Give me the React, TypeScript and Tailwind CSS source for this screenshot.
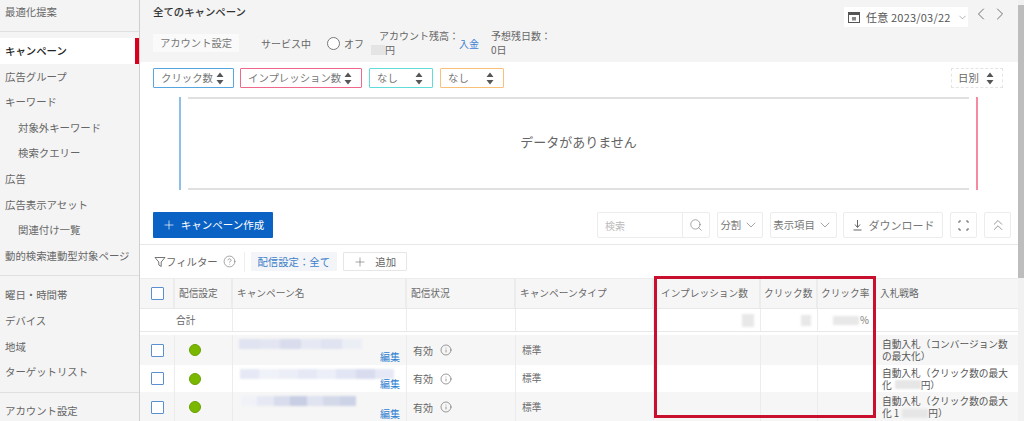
import React from 'react';
import { ChevronDown, ChevronLeft, ChevronRight, ChevronsUp, CircleHelp, Info, Plus, Search } from 'lucide-react';

const SortCaret = () => (
  <svg width="8" height="13" viewBox="0 0 8 13" className="shrink-0">
    <path d="M4 0.5 L7.5 5 H0.5 Z M4 12.5 L7.5 8 H0.5 Z" fill="#555" />
  </svg>
);

const SideItem = ({ label, active, sub }: { label: string; active?: boolean; sub?: boolean }) => (
  <div
    className={`h-[25.6px] flex items-center whitespace-nowrap ${sub ? 'pl-[18px]' : 'pl-[5px]'} ${
      active ? 'bg-white text-[#222] font-medium border-r-[4px] border-[#d9001b]' : ''
    }`}
  >
    {label}
  </div>
);

const Selector = ({ label, color, width }: { label: string; color: string; width: string }) => (
  <div className={`h-[20px] flex items-center justify-between pl-[7px] pr-[9px] border rounded-[1px] text-[10.4px] ${color} ${width}`}>
    <span className="whitespace-nowrap text-[#777]">{label}</span>
    <SortCaret />
  </div>
);

const ToolButton = ({ children, width }: { children: React.ReactNode; width: string }) => (
  <div className={`h-[26px] flex items-center justify-center gap-[2px] border border-[#ececec] rounded-[2px] text-[#777] whitespace-nowrap ${width}`}>
    {children}
  </div>
);

const COLS = 'grid grid-cols-[35px_58px_174px_109px_138px_107px_57px_58px_1fr]';

const HeaderCell = ({ children, last, pad = 'pl-[4px]' }: { children?: React.ReactNode; last?: boolean; pad?: string }) => (
  <div className={`flex items-center whitespace-nowrap overflow-hidden ${pad} ${last ? '' : 'border-r-2 border-[#ececec]'}`}>
    {children}
  </div>
);

const Faint = ({ className }: { className: string }) => <div className={`bg-[#e8e8e8] blur-[1px] ${className}`} />;

// blurred-out campaign names, one list of tints per row
const ROWS = [
  {
    bg: 'bg-[#f6f6f6]',
    h: 'h-[30px]',
    bar: 'w-[123px] ml-[6px]',
    name: ['#e0e3f0', '#e3e5f2', '#d8dcec', '#e6e8f4', '#e0e3f0', '#eceef6'],
    strategy: ['自動入札（コンバージョン数', 'の最大化）'],
    block: false,
  },
  {
    bg: 'bg-white',
    h: 'h-[27px]',
    bar: 'w-[154px] ml-[7px]',
    name: ['#e6e9f5', '#f0f2f9', '#eceef7', '#e6e9f5', '#edeff8', '#e2e5f3', '#d8dcee', '#e6e9f5'],
    strategy: ['自動入札（クリック数の最大', '化'],
    block: true,
  },
  {
    bg: 'bg-[#f6f6f6]',
    h: 'h-[30px]',
    bar: 'w-[115px] ml-[8px]',
    name: ['#f0f2f8', '#e6e9f3', '#d8dcec', '#c8cee4', '#e0e3f0', '#d4d9ea', '#cdd3e6'],
    strategy: ['自動入札（クリック数の最大', '化 1'],
    block: true,
  },
];

export default function App() {
  return (
    <div
      className="relative w-[1024px] h-[421px] overflow-hidden flex bg-white text-[10.4px] text-[#666]"
      style={{ fontFamily: '"Noto Sans CJK JP", "Open Sans", sans-serif' }}
    >
      {/* Sidebar */}
      <div className="w-[140px] shrink-0 bg-[#f4f4f4] border-r border-[#cfcfcf]">
        <div className="h-[32px] border-b border-[#e0e0e0] pl-[5px] pt-[4px]">最適化提案</div>
        <div className="pt-[6px] pb-[7px] border-b border-[#e0e0e0]">
          <SideItem label="キャンペーン" active />
          <SideItem label="広告グループ" />
          <SideItem label="キーワード" />
          <SideItem label="対象外キーワード" sub />
          <SideItem label="検索クエリー" sub />
          <SideItem label="広告" />
          <SideItem label="広告表示アセット" />
          <SideItem label="関連付け一覧" sub />
          <SideItem label="動的検索連動型対象ページ" />
        </div>
        <div className="pt-[6px] pb-[7px] border-b border-[#e0e0e0]">
          <SideItem label="曜日・時間帯" />
          <SideItem label="デバイス" />
          <SideItem label="地域" />
          <SideItem label="ターゲットリスト" />
        </div>
        <div className="pl-[5px] pt-[10px]">アカウント設定</div>
      </div>

      {/* Main column */}
      <div className="flex-1 min-w-0 flex flex-col">
        {/* Account header */}
        <div className="h-[62px] bg-[#f4f4f4] shrink-0 flex justify-between pl-[13px] pr-[8px]">
          <div>
            <div className="font-medium text-[#333] pt-[4px] leading-[16px]">全てのキャンペーン</div>
            <div className="flex items-center mt-[10px] h-[26px] text-[10px] whitespace-nowrap">
              <div className="w-[86px] h-[18px] bg-[#fafafa] flex items-center justify-center text-[10.3px] text-[#777]">アカウント設定</div>
              <span className="ml-[22px]">サービス中</span>
              <span className="ml-[16px] w-[13px] h-[13px] rounded-full border border-[#777] bg-white" />
              <span className="ml-[4px]">オフ</span>
              <div className="ml-[15px] leading-[14px] w-[80px]">
                <div>アカウント残高：</div>
                <div className="flex items-center -ml-[8px]">
                  <span className="w-[14px] h-[10px] bg-[#e4e4e4]" />
                  <span>円</span>
                </div>
              </div>
              <span className="text-[#3f7fd6]">入金</span>
              <div className="ml-[12px] leading-[14px]">
                <div>予想残日数：</div>
                <div>0日</div>
              </div>
            </div>
          </div>
          <div className="flex items-start pt-[7px]">
            <div className="w-[124px] h-[20px] bg-white flex items-center pl-[4px] gap-[6px] whitespace-nowrap text-[11px] text-[#555]">
              <svg width="12" height="11" viewBox="0 0 12 11" className="shrink-0">
                <rect x="0.5" y="0.5" width="11" height="10" fill="none" stroke="#555" />
                <rect x="0.5" y="0.5" width="11" height="2.5" fill="#555" />
                <rect x="4" y="5" width="4" height="3.5" fill="#888" />
              </svg>
              <span className="tracking-[0.2px]">任意 2023/03/22</span>
              <ChevronDown size={11} strokeWidth={1.2} className="text-[#777] shrink-0" />
            </div>
            <ChevronLeft size={20} strokeWidth={1.1} className="ml-[3px] text-[#666] -mt-[3px]" />
            <ChevronRight size={20} strokeWidth={1.1} className="-ml-[1px] text-[#666] -mt-[3px]" />
          </div>
        </div>

        {/* Metric selectors */}
        <div className="flex items-center justify-between h-[20px] mt-[6px] pl-[13px] pr-[15px] shrink-0">
          <div className="flex items-center gap-[6px]">
            <Selector label="クリック数" color="border-[#58a6e0]" width="w-[81px]" />
            <Selector label="インプレッション数" color="border-[#f0688c]" width="w-[122px]" />
            <Selector label="なし" color="border-[#62dcd8]" width="w-[64px] ml-[1px]" />
            <Selector label="なし" color="border-[#f8c078]" width="w-[64px] ml-[1px]" />
          </div>
          <div className="w-[52px] h-[20px] flex items-center justify-between pl-[6px] pr-[8px] border border-dashed border-[#e4e4e4]">
            <span>日別</span>
            <SortCaret />
          </div>
        </div>

        {/* Empty chart */}
        <div className="mt-[9px] ml-[39px] mr-[40px] h-[93px] shrink-0 flex">
          <div className="w-[2px] bg-[#8dc0e8] shrink-0" />
          <div className="flex-1 mx-[7px] pb-[3px] border-y-2 border-[#e0e0e0] flex items-center justify-center text-[13px] text-[#666]">
            データがありません
          </div>
          <div className="w-[2px] bg-[#f58aa0] shrink-0" />
        </div>

        {/* Toolbar */}
        <div className="mt-[22px] h-[33px] shrink-0 pl-[13px] pr-[7px] flex items-start justify-between border-b border-[#e8e8e8]">
          <div className="w-[120px] h-[26px] bg-[#0a62c4] rounded-[1px] flex items-center justify-center gap-[5px] text-white text-[10.5px] whitespace-nowrap">
            <Plus size={14} strokeWidth={1.2} />
            キャンペーン作成
          </div>
          <div className="flex items-center gap-[6.8px]">
            <div className="h-[26px] w-[113px] flex border border-[#ececec] rounded-[2px] text-[10px] text-[#bbb]">
              <div className="flex-1 flex items-center pl-[7px]">検索</div>
              <div className="w-[27px] flex items-center justify-center border-l border-[#ececec] text-[#777]">
                <Search size={14} strokeWidth={1.1} />
              </div>
            </div>
            <ToolButton width="w-[46px]">
              分割<ChevronDown size={16} strokeWidth={1} />
            </ToolButton>
            <ToolButton width="w-[67px]">
              表示項目<ChevronDown size={16} strokeWidth={1} />
            </ToolButton>
            <ToolButton width="w-[100px] text-[11px]">
              <svg width="11" height="12" viewBox="0 0 11 12" className="mr-[3px]">
                <path d="M5.5 1 V8 M3 5.5 L5.5 8.5 L8 5.5 M1.5 11 H9.5" fill="none" stroke="#666" strokeWidth="1" />
              </svg>
              ダウンロード
            </ToolButton>
            <ToolButton width="w-[27px]">
              <svg width="11" height="11" viewBox="0 0 11 11">
                <path d="M1 3 V1 H3 M8 1 H10 V3 M10 8 V10 H8 M3 10 H1 V8" fill="none" stroke="#666" strokeWidth="1" />
              </svg>
            </ToolButton>
            <ToolButton width="w-[27px]">
              <ChevronsUp size={18} strokeWidth={1} />
            </ToolButton>
          </div>
        </div>

        {/* Filter row */}
        <div className="h-[34px] shrink-0 pl-[14px] flex items-center border-b border-[#ececec]">
          <svg width="12" height="12" viewBox="0 0 12 12" className="shrink-0">
            <path d="M1 1.5 H11 L7.2 6 V10.5 L4.8 9 V6 Z" fill="none" stroke="#666" strokeWidth="0.9" />
          </svg>
          <span className="whitespace-nowrap">フィルター</span>
          <CircleHelp size={13} strokeWidth={1.2} className="ml-[5px] text-[#777]" />
          <span className="ml-[8px] w-px h-[20px] bg-[#eee]" />
          <div className="ml-[6px] w-[86px] h-[19px] bg-[#f3f5f8] flex items-center justify-center text-[#3f7fc8] whitespace-nowrap">配信設定：全て</div>
          <div className="ml-[6px] w-[64px] h-[19px] border border-[#e6e6e6] rounded-[1px] flex items-center justify-center gap-[8px] whitespace-nowrap">
            <Plus size={14} strokeWidth={1} />
            追加
          </div>
        </div>

        {/* Table */}
        <div className="text-[9.7px]">
          <div className={`${COLS} h-[30px] bg-[#f6f6f6] border-b border-[#e8e8e8]`}>
            <HeaderCell>
              <span className="ml-[7px] w-[13px] h-[13px] border border-[#5a8fd0] rounded-[1px] bg-white" />
            </HeaderCell>
            <HeaderCell>配信設定</HeaderCell>
            <HeaderCell>キャンペーン名</HeaderCell>
            <HeaderCell>配信状況</HeaderCell>
            <HeaderCell>キャンペーンタイプ</HeaderCell>
            <HeaderCell pad="pl-[7px]">インプレッション数</HeaderCell>
            <HeaderCell pad="pl-[3px]">クリック数</HeaderCell>
            <HeaderCell pad="pl-[3px]">クリック率</HeaderCell>
            <HeaderCell last>入札戦略</HeaderCell>
          </div>
          <div className={`${COLS} h-[23px] border-b border-[#e8e8e8]`}>
            <div />
            <div className="border-r border-[#ececec] flex items-center pl-[1px]">合計</div>
            <div className="border-r border-[#ececec]" />
            <div className="border-r border-[#ececec]" />
            <div className="border-r border-[#ececec]" />
            <div className="border-r border-[#ececec] flex items-center justify-end pr-[6px]">
              <Faint className="w-[12px] h-[13px]" />
            </div>
            <div className="border-r border-[#ececec] flex items-center justify-end pr-[6px]">
              <Faint className="w-[10px] h-[11px]" />
            </div>
            <div className="flex items-center justify-end pr-[7px] text-[#777]">
              <Faint className="w-[26px] h-[9px] mr-[1px]" />%
            </div>
            <div />
          </div>
          <div className="h-[3px]" />
          {ROWS.map((row, i) => (
            <div key={i} className={`${COLS} ${row.h} ${row.bg}`}>
              <div className="flex items-center border-r border-[#ececec]">
                <span className="ml-[11px] w-[13px] h-[13px] border border-[#5a8fd0] rounded-[1px] bg-white" />
              </div>
              <div className="flex items-center border-r border-[#ececec]">
                <span className="ml-[14px] w-[12px] h-[12px] rounded-full bg-[#7ab800] border border-[#6aa000]" />
              </div>
              <div className="relative border-r border-[#ececec]">
                <div className={`flex h-[10px] mt-[4px] blur-[1px] overflow-hidden ${row.bar}`}>
                  {row.name.map((tint, j) => (
                    <span key={j} className="flex-1" style={{ backgroundColor: tint }} />
                  ))}
                </div>
                <span className="absolute right-[6px] bottom-[1px] text-[10px] text-[#2f80d0]">編集</span>
              </div>
              <div className="flex items-center pl-[6px] gap-[7px] border-r border-[#ececec] text-[10px]">
                有効
                <Info size={12} strokeWidth={1.3} className="text-[#666]" />
              </div>
              <div className="flex items-center pl-[6px] border-r border-[#ececec]">標準</div>
              <div className="border-r border-[#ececec]" />
              <div className="border-r border-[#ececec]" />
              <div className="border-r border-[#ececec]" />
              <div className="pl-[6px] leading-[12px] flex flex-col justify-center whitespace-nowrap overflow-hidden text-[#555]">
                <div>{row.strategy[0]}</div>
                <div className="flex items-center">
                  {row.strategy[1]}
                  {row.block && <span className="ml-[3px] w-[26px] h-[9px] bg-[#e6e6e6] blur-[1px]" />}
                  {row.block && <span>円）</span>}
                </div>
              </div>
            </div>
          ))}
        </div>
      </div>

      {/* Scrollbar */}
      <div className="w-[6px] shrink-0 bg-[#f1f1f1] flex flex-col">
        <div className="h-[5px]" />
        <div className="h-[273px] bg-[#bdbdbd]" />
      </div>

      {/* Highlight frame drawn over the table */}
      <div className="absolute left-[654px] top-[276px] w-[222px] h-[142px] border-[3px] border-[#c8102e] pointer-events-none" />
    </div>
  );
}
